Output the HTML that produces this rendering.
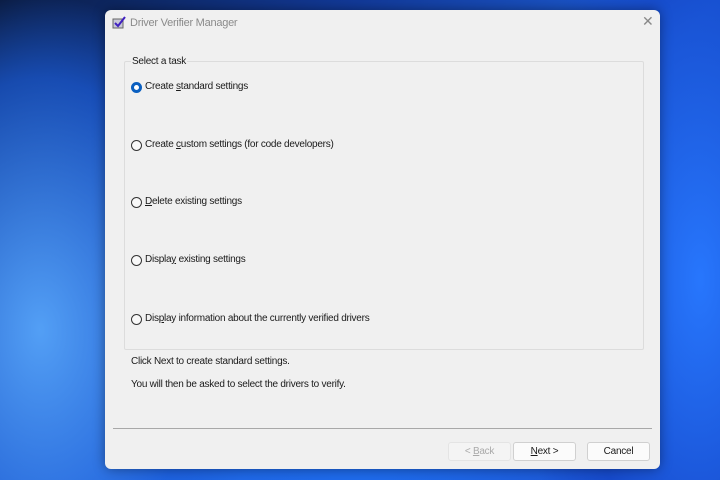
<!DOCTYPE html>
<html><head><style>
html,body{margin:0;padding:0;width:720px;height:480px;overflow:hidden}
body{position:relative;font-family:"Liberation Sans",sans-serif;font-size:10px;letter-spacing:-0.25px;color:#1a1a1a;
background:
radial-gradient(ellipse 260px 420px at 40px 330px,rgba(90,170,255,.9),rgba(30,100,230,.6) 60%,transparent 80%),
radial-gradient(ellipse 200px 500px at 700px 280px,rgba(40,120,255,.95),rgba(20,70,200,.7) 60%,transparent 90%),
radial-gradient(ellipse 300px 200px at 360px 500px,rgba(30,110,240,.9),transparent 80%),
linear-gradient(135deg,#0b1d45 0%,#123a9a 30%,#1f63e0 60%,#1a50d0 100%);}
.win{position:absolute;left:105px;top:10px;width:555px;height:459px;background:#f0f0f0;border-radius:6px;box-shadow:0 0 12px rgba(0,0,0,.4)}
.title{position:absolute;left:25px;top:7px;color:#8a8a8a;font-size:11px}
.close{position:absolute;left:537px;top:3px;color:#888;font-size:14px}
.grp{position:absolute;left:19px;top:51px;width:518px;height:287px;border:1px solid #dcdcdc;border-radius:2px}
.lg{position:absolute;left:26px;top:46px;background:#f0f0f0;padding:0 1px}
.r{position:absolute;left:26px}
.r i{position:absolute;left:0;top:0;width:9px;height:9px;border:1px solid #333;border-radius:50%;background:#f8f8f8}
.r.on i{border:3px solid #0a5fc0;width:5px;height:5px;background:#fff}
.r span{position:absolute;left:14px;top:-1px;white-space:nowrap}
.t{position:absolute;left:26px}
.sep{position:absolute;left:8px;top:418px;width:539px;height:1px;background:#a8a8a8}
.b{position:absolute;top:432px;height:17px;width:61px;border:1px solid #d0d0d0;border-radius:3px;background:#fbfbfb;text-align:center;line-height:17px}
</style></head><body>
<div class="win">
<svg style="position:absolute;left:7px;top:6px" width="14" height="13"><rect x="1" y="3" width="10" height="9" fill="#c8c8d8" stroke="#666"/><path d="M3 7 L6 10 L13 1" stroke="#4020c0" stroke-width="2" fill="none"/></svg>
<div class="title">Driver Verifier Manager</div>
<div class="close">✕</div>
<div class="grp"></div>
<div class="lg">Select a task</div>
<div class="r on" style="top:72px"><i></i><span>Create <u>s</u>tandard settings</span></div>
<div class="r" style="top:130px"><i></i><span>Create <u>c</u>ustom settings (for code developers)</span></div>
<div class="r" style="top:187px"><i></i><span><u>D</u>elete existing settings</span></div>
<div class="r" style="top:245px"><i></i><span>Displa<u>y</u> existing settings</span></div>
<div class="r" style="top:304px"><i></i><span>Dis<u>p</u>lay information about the currently verified drivers</span></div>
<div class="t" style="top:346px">Click Next to create standard settings.</div>
<div class="t" style="top:369px">You will then be asked to select the drivers to verify.</div>
<div class="sep"></div>
<div class="b" style="left:343px;color:#aaa;border-color:#e4e4e4;background:#f4f4f4">&lt; <u>B</u>ack</div>
<div class="b" style="left:408px"><u>N</u>ext &gt;</div>
<div class="b" style="left:482px">Cancel</div>
</div>
</body></html>
